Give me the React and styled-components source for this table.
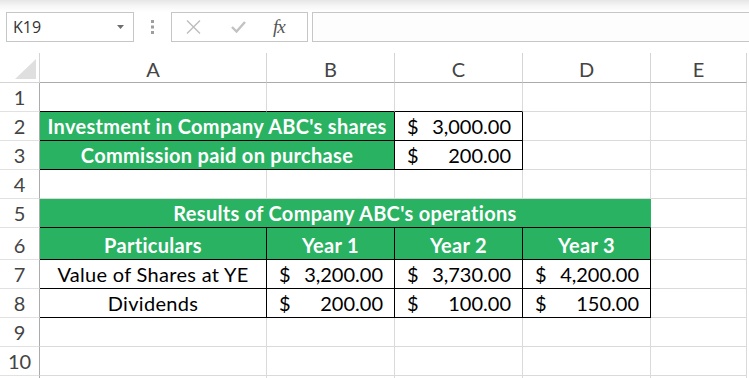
import React from 'react';
import styled, {createGlobalStyle} from 'styled-components';

const green = '#2ab263';
const gridLine = '#dadada';
const headLine = '#ababab';
const cellFont = 'Lato, "Open Sans", sans-serif';

const GlobalStyle = createGlobalStyle`
  html, body {
    margin: 0;
    padding: 0;
    background: #fff;
  }
  body {
    width: 749px;
    height: 378px;
    overflow: hidden;
    font-family: ${cellFont};
  }
`;

const Screen = styled.div `
  width: 749px;
  height: 378px;
  overflow: hidden;
  display: flex;
  flex-direction: column;
`;

const Toolbar = styled.div `
  height: 53px;
  flex: none;
  box-sizing: border-box;
  padding: 12px 0 0 6px;
  display: flex;
  align-items: flex-start;
  background: linear-gradient(#e6e6e6 0, #f6f6f6 6px, #fff 12px);
`;

const NameBox = styled.div `
  width: 128px;
  height: 30px;
  box-sizing: border-box;
  border: 1px solid #c6c6c6;
  background: #fff;
  display: flex;
  align-items: center;
  justify-content: space-between;
  padding: 0 8px 0 6px;
  font-family: "Open Sans", sans-serif;
  font-size: 16px;
  color: #333;
`;

const Grip = styled.div `
  width: 37px;
  height: 30px;
  display: flex;
  justify-content: center;
  align-items: center;
`;

const ButtonBox = styled.div `
  width: 137px;
  height: 30px;
  box-sizing: border-box;
  border: 1px solid #c6c6c6;
  background: #fff;
  display: flex;
  align-items: center;
  padding-left: 14px;
`;

const IconSlot = styled.div `
  width: ${props => `${props.$w}px`};
  display: flex;
  align-items: center;
`;

const Fx = styled.span `
  font-family: "Liberation Serif", serif;
  font-style: italic;
  font-size: 19px;
  color: #555;
  letter-spacing: -1px;
`;

const FormulaInput = styled.div `
  flex: 1;
  margin-left: 4px;
  height: 30px;
  box-sizing: border-box;
  border: 1px solid #c6c6c6;
  border-right: none;
  background: #fdfdfd;
`;

const Sheet = styled.div `
  display: grid;
  grid-template-columns: 40px 227px 128px 128px 128px 96px 2px;
  grid-template-rows: 30px repeat(5, 29px) 32px repeat(4, 29px) 2px;
  font-family: ${cellFont};
`;

const Corner = styled.div `
  box-sizing: border-box;
  border-right: 1px solid #d4d4d4;
  border-bottom: 1px solid #d4d4d4;
  display: flex;
  align-items: flex-end;
  justify-content: flex-end;
  padding: 0 3px 3px 0;
`;

const ColHead = styled.div `
  box-sizing: border-box;
  border-right: 1px solid #d4d4d4;
  border-bottom: 1px solid ${headLine};
  display: flex;
  align-items: flex-end;
  justify-content: center;
  padding-bottom: 3px;
  font-size: 20px;
  line-height: 1;
  color: #444;
`;

const RowHead = styled.div `
  box-sizing: border-box;
  border-right: 1px solid ${headLine};
  border-bottom: 1px solid #e1e1e1;
  display: flex;
  align-items: flex-end;
  justify-content: center;
  padding-bottom: 4px;
  font-size: 20px;
  line-height: 1;
  color: #444;
`;

const Cell = styled.div `
  box-sizing: border-box;
  grid-column: span ${props => props.$span || 1};
  border-right: 1px solid ${props => props.$right || props.$fill || gridLine};
  border-bottom: 1px solid ${props => props.$bottom || props.$fill || gridLine};
  background: ${props => props.$fill || 'transparent'};
  color: ${props => props.$fill ? '#fff' : '#000'};
  font-weight: ${props => props.$bold ? 700 : 400};
  display: flex;
  align-items: flex-end;
  justify-content: ${props => props.$money ? 'space-between' : 'center'};
  padding: ${props => props.$money ? '0 11px 4px 12px' : '0 4px 4px'};
  font-size: 20px;
  letter-spacing: ${props => props.$money ? '0' : '0.3px'};
  line-height: 1;
  white-space: nowrap;
  overflow: hidden;
`;

const Tail = styled.div `
  border-right: 1px solid ${props => props.$head ? headLine : gridLine};
`;

const Blank = styled.div ``;

const Money = ({value, ...others}) => (
  <Cell $money $right="#000" $bottom="#000" {...others}>
    <span>$</span>
    <span>{value}</span>
  </Cell>
);

const Caret = () => (
  <svg width="8" height="4" viewBox="0 0 8 4">
    <path d="M0 0h7L3.5 4z" fill="#6d6d6d" />
  </svg>
);

const Dots = () => (
  <svg width="4" height="14" viewBox="0 0 4 14">
    <rect x="0" y="0" width="3" height="3" fill="#9e9e9e" />
    <rect x="0" y="5.5" width="3" height="3" fill="#9e9e9e" />
    <rect x="0" y="11" width="3" height="3" fill="#9e9e9e" />
  </svg>
);

const Cross = () => (
  <svg width="15" height="14" viewBox="0 0 15 14">
    <path d="M1 0.5L14 13.5M14 0.5L1 13.5" stroke="#bdbdbd" strokeWidth="1.4" fill="none" />
  </svg>
);

const Check = () => (
  <svg width="15" height="12" viewBox="0 0 15 12">
    <path d="M1 6l4.5 4.5L14 1" stroke="#c2c2c2" strokeWidth="2.4" fill="none" />
  </svg>
);

const CornerMark = () => (
  <svg width="21" height="20" viewBox="0 0 21 20">
    <path d="M21 0V20H0z" fill="#dfdfdf" />
  </svg>
);

const emptyRow = n => (
  <React.Fragment key={n}>
    <RowHead>{n}</RowHead>
    <Cell />
    <Cell />
    <Cell />
    <Cell />
    <Cell />
    <Blank />
  </React.Fragment>
);

const App = () => (
  <Screen>
    <GlobalStyle />
    <Toolbar>
      <NameBox>
        <span>K19</span>
        <Caret />
      </NameBox>
      <Grip>
        <Dots />
      </Grip>
      <ButtonBox>
        <IconSlot $w={45}><Cross /></IconSlot>
        <IconSlot $w={42}><Check /></IconSlot>
        <IconSlot $w={22}><Fx>fx</Fx></IconSlot>
      </ButtonBox>
      <FormulaInput />
    </Toolbar>
    <Sheet>
      <Corner><CornerMark /></Corner>
      {['A', 'B', 'C', 'D', 'E'].map(letter => <ColHead key={letter}>{letter}</ColHead>)}
      <Blank />

      <RowHead>1</RowHead>
      <Cell $bottom="#000" />
      <Cell $bottom="#000" />
      <Cell $bottom="#000" />
      <Cell />
      <Cell />
      <Blank />

      <RowHead>2</RowHead>
      <Cell $span={2} $fill={green} $bold $right="#000" $bottom="#000">
        Investment in Company ABC's shares
      </Cell>
      <Money value="3,000.00" />
      <Cell />
      <Cell />
      <Blank />

      <RowHead>3</RowHead>
      <Cell $span={2} $fill={green} $bold $right="#000" $bottom="#000">
        Commission paid on purchase
      </Cell>
      <Money value="200.00" />
      <Cell />
      <Cell />
      <Blank />

      {emptyRow(4)}

      <RowHead>5</RowHead>
      <Cell $span={4} $fill={green} $bold $bottom="#000">
        Results of Company ABC's operations
      </Cell>
      <Cell />
      <Blank />

      <RowHead>6</RowHead>
      {['Particulars', 'Year 1', 'Year 2', 'Year 3'].map(label => (
        <Cell key={label} $fill={green} $bold $right="#000" $bottom="#000">{label}</Cell>
      ))}
      <Cell />
      <Blank />

      <RowHead>7</RowHead>
      <Cell $right="#000" $bottom="#000">Value of Shares at YE</Cell>
      <Money value="3,200.00" />
      <Money value="3,730.00" />
      <Money value="4,200.00" />
      <Cell />
      <Blank />

      <RowHead>8</RowHead>
      <Cell $right="#000" $bottom="#000">Dividends</Cell>
      <Money value="200.00" />
      <Money value="100.00" />
      <Money value="150.00" />
      <Cell />
      <Blank />

      {emptyRow(9)}
      {emptyRow(10)}

      <Tail $head />
      <Tail />
      <Tail />
      <Tail />
      <Tail />
      <Tail />
      <Blank />
    </Sheet>
  </Screen>
);

export default App;
